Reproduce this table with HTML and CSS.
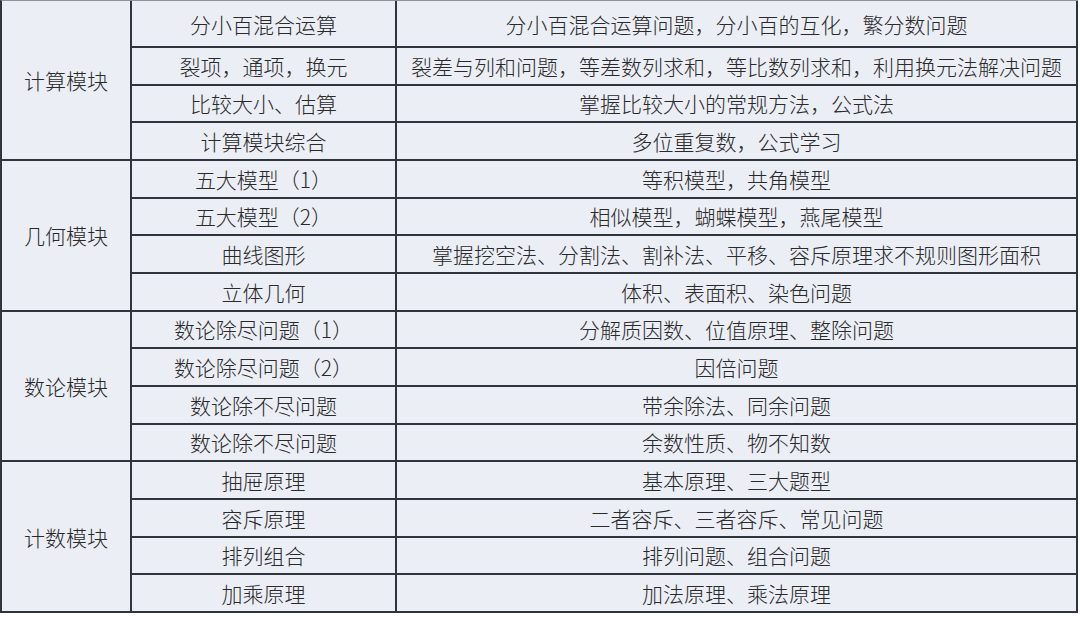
FILE: index.html
```html
<!DOCTYPE html>
<html lang="zh">
<head>
<meta charset="utf-8">
<link rel="stylesheet" href="styles.css">
</head>
<body>
<div class="grid">
  <div class="cell group g1">计算模块</div>
  <div class="cell">分小百混合运算</div>
  <div class="cell">分小百混合运算问题，分小百的互化，繁分数问题</div>
  <div class="cell">裂项，通项，换元</div>
  <div class="cell">裂差与列和问题，等差数列求和，等比数列求和，利用换元法解决问题</div>
  <div class="cell">比较大小、估算</div>
  <div class="cell">掌握比较大小的常规方法，公式法</div>
  <div class="cell">计算模块综合</div>
  <div class="cell">多位重复数，公式学习</div>

  <div class="cell group g2">几何模块</div>
  <div class="cell">五大模型（1）</div>
  <div class="cell">等积模型，共角模型</div>
  <div class="cell">五大模型（2）</div>
  <div class="cell">相似模型，蝴蝶模型，燕尾模型</div>
  <div class="cell">曲线图形</div>
  <div class="cell">掌握挖空法、分割法、割补法、平移、容斥原理求不规则图形面积</div>
  <div class="cell">立体几何</div>
  <div class="cell">体积、表面积、染色问题</div>

  <div class="cell group g3">数论模块</div>
  <div class="cell">数论除尽问题（1）</div>
  <div class="cell">分解质因数、位值原理、整除问题</div>
  <div class="cell">数论除尽问题（2）</div>
  <div class="cell">因倍问题</div>
  <div class="cell">数论除不尽问题</div>
  <div class="cell">带余除法、同余问题</div>
  <div class="cell">数论除不尽问题</div>
  <div class="cell">余数性质、物不知数</div>

  <div class="cell group g4">计数模块</div>
  <div class="cell">抽屉原理</div>
  <div class="cell">基本原理、三大题型</div>
  <div class="cell">容斥原理</div>
  <div class="cell">二者容斥、三者容斥、常见问题</div>
  <div class="cell">排列组合</div>
  <div class="cell">排列问题、组合问题</div>
  <div class="cell">加乘原理</div>
  <div class="cell">加法原理、乘法原理</div>
</div>
</body>
</html>
```
FILE: styles.css
```css
html, body {
  margin: 0;
  padding: 0;
  background: #ffffff;
}
body {
  font-family: "Noto Sans CJK SC", "Noto Sans", sans-serif;
  color: #2a2a2a;
}
.grid {
  width: 1078px;
  box-sizing: border-box;
  display: grid;
  grid-template-columns: 130px 265px 1fr;
  grid-template-rows: 47px repeat(15, 37.67px);
  grid-auto-flow: row dense;
  border-left: 2px solid #30353d;
  border-top: 1px solid #8d929a;
  background: #eceef6;
}
.cell {
  box-sizing: border-box;
  border-right: 2px solid #30353d;
  border-bottom: 2px solid #30353d;
  display: flex;
  align-items: center;
  justify-content: center;
  font-size: 21px;
  font-weight: 300;
  line-height: 1;
  white-space: nowrap;
  padding-top: 1px;
}
.group {
  grid-column: 1;
}
.g1 { grid-row: 1 / span 4; }
.g2 { grid-row: 5 / span 4; }
.g3 { grid-row: 9 / span 4; }
.g4 { grid-row: 13 / span 4; }
```
